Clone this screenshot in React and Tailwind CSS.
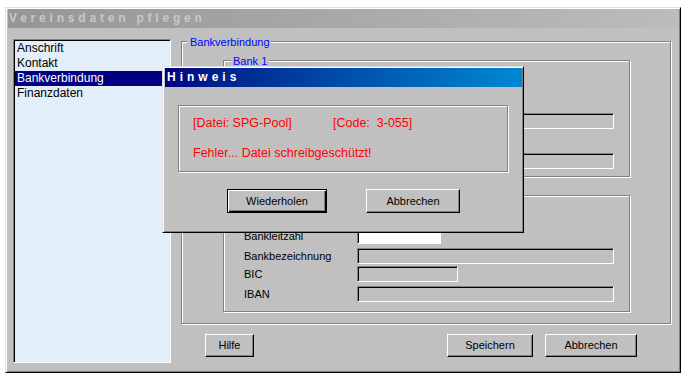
const sunken =
	"border border-t-[#808080] border-l-[#808080] border-b-white border-r-white shadow-[inset_1px_1px_0_#000]";
const raised =
	"border border-t-white border-l-white border-b-black border-r-black shadow-[inset_-1px_-1px_0_#808080]";
const etched = "border border-[#808080] shadow-[inset_1px_1px_0_#fff,1px_1px_0_#fff]";

const sections = ["Anschrift", "Kontakt", "Bankverbindung", "Finanzdaten"];

function Row({ label, width, white, className = "" }) {
	return (
		<div className={`flex items-center h-[16px] ${className}`}>
			<span className="w-[113px] text-[11px] leading-none text-black">{label}</span>
			<div className={`h-[16px] ${width} ${sunken} ${white ? "bg-white" : "bg-[#c0c0c0]"}`} />
		</div>
	);
}

// Bank 1 sits under the dialog: only the right ends of its fields show
function BankOne() {
	return (
		<div className={`relative w-[407px] h-[117px] ${etched} pt-[32px] pl-[20px] flex flex-col gap-[4px]`}>
			<span className="absolute -top-[7px] left-[7px] bg-[#c0c0c0] px-[2px] text-[11px] leading-[14px] text-[#0000ff]">
				Bank 1
			</span>
			<Row width="w-[84px]" white />
			<Row width="w-[257px]" />
			<Row width="w-[101px]" />
			<Row width="w-[257px]" />
		</div>
	);
}

function BankTwo() {
	return (
		<div className={`w-[407px] h-[117px] mt-[18px] ${etched} pt-[32px] pl-[20px] flex flex-col`}>
			<Row label="Bankleitzahl" width="w-[84px]" white />
			<Row label="Bankbezeichnung" width="w-[257px]" className="mt-[4px]" />
			<Row label="BIC" width="w-[101px]" className="mt-[2px]" />
			<Row label="IBAN" width="w-[257px]" className="mt-[4px]" />
		</div>
	);
}

function Button({ children, className }) {
	return (
		<button className={`h-[23px] ${raised} bg-[#c0c0c0] text-[11px] text-black ${className}`}>{children}</button>
	);
}

function HinweisDialog() {
	return (
		<div className="absolute left-[156px] top-[58px] w-[362px] h-[167px] bg-[#c0c0c0] border border-t-[#dfdfdf] border-l-[#dfdfdf] border-r-black border-b-black shadow-[inset_1px_1px_0_#fff,inset_-1px_-1px_0_#808080] flex flex-col">
			<div className="ml-[2px] mt-[1px] w-[357px] h-[19px] bg-linear-to-r from-[#000080] to-[#0088d4] pl-[2px] text-[12px] leading-[19px] font-bold tracking-[4px] text-white">
				Hinweis
			</div>
			<div className={`ml-[15px] mt-[18px] w-[330px] h-[67px] ${etched} pl-[14px] pt-[10px] text-[12.5px] leading-[15px] text-[#ff0000]`}>
				<div className="flex">
					<span className="w-[140px]">[Datei: SPG-Pool]</span>
					<span className="whitespace-pre">[Code:  3-055]</span>
				</div>
				<div className="mt-[15px]">Fehler... Datei schreibgeschützt!</div>
			</div>
			<div className="flex mt-[17px]">
				<button className="ml-[64px] w-[100px] h-[24px] border border-black bg-[#c0c0c0] shadow-[inset_1px_1px_0_#fff,inset_-1px_-1px_0_#000,inset_-2px_-2px_0_#808080] text-[11px] text-black">
					Wiederholen
				</button>
				<Button className="ml-[39px] w-[94px] h-[24px]">Abbrechen</Button>
			</div>
		</div>
	);
}

export default function App() {
	return (
		<div className="min-h-screen bg-white pt-[7px] pl-[5px] font-['Liberation_Sans',Arial,sans-serif]">
			<div className="relative w-[676px] h-[366px] bg-[#c0c0c0] border border-t-[#dfdfdf] border-l-[#dfdfdf] border-r-black border-b-black shadow-[inset_1px_1px_0_#fff,inset_-1px_-1px_0_#808080] flex flex-col">
				<div className="ml-[2px] mt-[1px] w-[671px] h-[19px] bg-linear-to-r from-[#969696] to-[#bcbcbc] pl-[1px] text-[12px] leading-[19px] font-bold tracking-[3.8px] text-[#c8c8c8]">
					Vereinsdaten pflegen
				</div>

				<div className="flex mt-[11px] ml-[7px]">
					<div className={`w-[158px] h-[324px] bg-[#e2eef9] ${sunken} px-[1px] pt-[1px]`}>
						{sections.map((s) => (
							<div
								key={s}
								className={`h-[15px] pl-[2px] text-[12px] leading-[15px] ${
									s === "Bankverbindung" ? "bg-[#000080] text-white" : "text-black"
								}`}
							>
								{s}
							</div>
						))}
					</div>

					<div className="ml-[10px] mt-[2px] flex flex-col">
						<div className={`relative w-[490px] h-[283px] ${etched} pt-[18px] pl-[41px]`}>
							<span className="absolute -top-[7px] left-[5px] bg-[#c0c0c0] pl-[3px] pr-[1px] text-[11px] leading-[14px] text-[#0000ff]">
								Bankverbindung
							</span>
							<BankOne />
							<BankTwo />
						</div>
						<div className="flex mt-[10px]">
							<Button className="ml-[24px] w-[49px]">Hilfe</Button>
							<Button className="ml-[193px] w-[86px]">Speichern</Button>
							<Button className="ml-[12px] w-[92px]">Abbrechen</Button>
						</div>
					</div>
				</div>

				<HinweisDialog />
			</div>
		</div>
	);
}
